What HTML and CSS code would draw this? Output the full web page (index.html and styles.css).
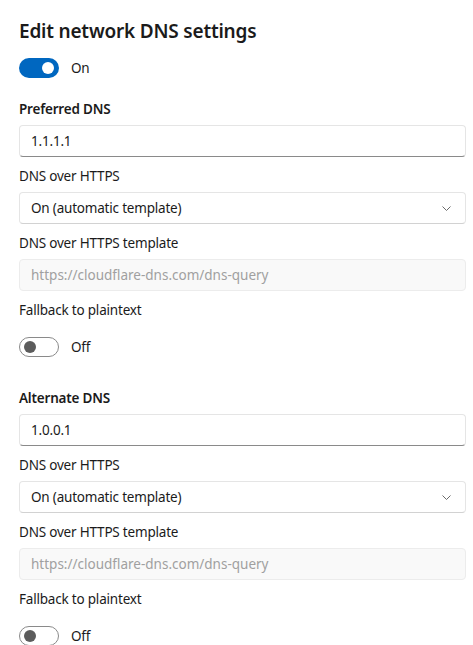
FILE: index.html
```html
<!DOCTYPE html>
<html lang="en">
<head>
<meta charset="utf-8">
<title>Edit network DNS settings</title>
<link rel="stylesheet" href="styles.css">
</head>
<body>
<main class="dialog">
  <h1 class="title">Edit network DNS settings</h1>
  <div class="toggle-row toggle-main">
    <span class="toggle on"><span class="knob"></span></span>
    <span class="toggle-text">On</span>
  </div>

  <section class="section">
    <div class="field">
      <label class="label strong">Preferred DNS</label>
      <div class="textbox">1.1.1.1</div>
    </div>
    <div class="field">
      <label class="label">DNS over HTTPS</label>
      <div class="select">
        <span>On (automatic template)</span>
        <svg class="chev" width="9" height="5" viewBox="0 0 9 5"><path d="M0.5 0.5l4 4 4-4" fill="none" stroke="#6a6a6a" stroke-width="1"/></svg>
      </div>
    </div>
    <div class="field">
      <label class="label">DNS over HTTPS template</label>
      <div class="textbox disabled">https://cloudflare-dns.com/dns-query</div>
    </div>
    <div class="field">
      <label class="label">Fallback to plaintext</label>
      <div class="toggle-row">
        <span class="toggle off"><span class="knob"></span></span>
        <span class="toggle-text">Off</span>
      </div>
    </div>
  </section>

  <section class="section">
    <div class="field">
      <label class="label strong">Alternate DNS</label>
      <div class="textbox">1.0.0.1</div>
    </div>
    <div class="field">
      <label class="label">DNS over HTTPS</label>
      <div class="select">
        <span>On (automatic template)</span>
        <svg class="chev" width="9" height="5" viewBox="0 0 9 5"><path d="M0.5 0.5l4 4 4-4" fill="none" stroke="#6a6a6a" stroke-width="1"/></svg>
      </div>
    </div>
    <div class="field">
      <label class="label">DNS over HTTPS template</label>
      <div class="textbox disabled">https://cloudflare-dns.com/dns-query</div>
    </div>
    <div class="field">
      <label class="label">Fallback to plaintext</label>
      <div class="toggle-row">
        <span class="toggle off"><span class="knob"></span></span>
        <span class="toggle-text">Off</span>
      </div>
    </div>
  </section>
</main>
</body>
</html>
```
FILE: styles.css
```css
html, body {
  margin: 0;
  padding: 0;
  background: #ffffff;
  height: 645px;
  overflow: hidden;
}
body {
  font-family: "Noto Sans", "Open Sans", sans-serif;
  font-size: 13.5px;
  letter-spacing: -0.2px;
  color: #1b1b1b;
}
.dialog {
  padding: 18px 7px 0 19px;
}
.title {
  margin: 0;
  font-size: 19px;
  font-weight: 600;
  letter-spacing: -0.2px;
  line-height: 26px;
  color: #1b1b1b;
}
.toggle-row {
  display: flex;
  align-items: center;
  gap: 12px;
  height: 20px;
}
.toggle-main {
  margin-top: 14px;
}
.toggle {
  width: 40px;
  height: 20px;
  box-sizing: border-box;
  border-radius: 10px;
  display: flex;
  align-items: center;
}
.toggle.on {
  background: #0067c0;
  justify-content: flex-end;
  padding-right: 5px;
}
.toggle.on .knob {
  width: 12px;
  height: 12px;
  background: #fff;
  border-radius: 50%;
}
.toggle.off {
  border: 1px solid #8a8a8a;
  padding-left: 4px;
}
.toggle.off .knob {
  width: 12px;
  height: 12px;
  background: #5c5c5c;
  border-radius: 50%;
}
.toggle-text {
  line-height: 20px;
}
.section {
  display: flex;
  flex-direction: column;
  gap: 9px;
  margin-top: 21px;
}
.section + .section {
  margin-top: 31px;
}
.field {
  display: flex;
  flex-direction: column;
  gap: 6px;
}
.label {
  line-height: 20px;
  display: block;
}
.label.strong {
  font-weight: 600;
}
.field:last-child .toggle-row {
  margin-top: 11px;
}
.textbox, .select {
  height: 32px;
  box-sizing: border-box;
  border: 1px solid #e5e5e5;
  border-bottom-color: #8a8a8a;
  border-radius: 4px;
  background: #fff;
  padding: 0 11px;
  display: flex;
  align-items: center;
}
.select {
  border-bottom-color: #d2d2d2;
  justify-content: space-between;
  padding-right: 14px;
}
.textbox.disabled {
  background: #f9f9f9;
  border-color: #ececec;
  color: #a0a0a0;
  letter-spacing: 0;
}
.chev {
  display: block;
}
```
